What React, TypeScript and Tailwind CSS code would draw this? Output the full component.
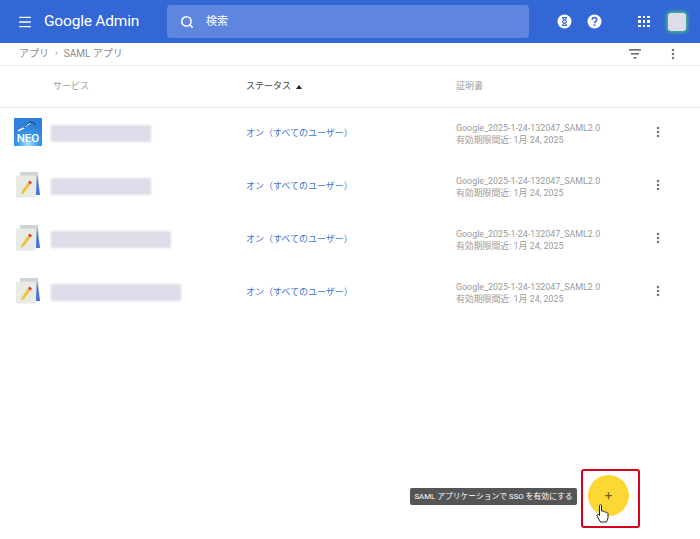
import { EllipsisVertical, Menu, Search } from "lucide-react";

const FONT = "font-['Roboto','Noto_Sans_CJK_JP',sans-serif]";

const rows = [
  { icon: "neo", blur: "w-[100px]" },
  { icon: "note", blur: "w-[100px]" },
  { icon: "note", blur: "w-[120px]" },
  { icon: "note", blur: "w-[130px]" },
];

function NeoIcon() {
  return (
    <svg width="28" height="28" viewBox="0 0 28 28" className="block">
      <defs>
        <radialGradient id="neo" cx="50%" cy="95%" r="70%">
          <stop offset="0%" stopColor="#a5e4ff" />
          <stop offset="55%" stopColor="#3a97ea" />
          <stop offset="100%" stopColor="#2f82dc" />
        </radialGradient>
      </defs>
      <rect width="28" height="28" fill="url(#neo)" />
      <path d="M4 13 C6 11 8 11 10 10 C11 8 13 7 16 5" fill="none" stroke="#fff" strokeWidth="1.3" />
      <path d="M10 10 C11 8 13 6 16 4 C18 4 20 5 22 7" fill="none" stroke="#1c2f5c" strokeWidth="1" />
      <text x="14" y="24" textAnchor="middle" fontSize="11.5" fontWeight="500" fill="#fff" fontFamily="Roboto, sans-serif">NEO</text>
    </svg>
  );
}

function NoteIcon() {
  return (
    <svg width="24" height="26" viewBox="0 0 24 26" className="block blur-[0.4px]">
      <path d="M4 0 H22 L24 23 H4 Z" fill="#ccd4d6" />
      <path d="M21 3 L24 23 H20 Z" fill="#3f74dc" />
      <rect x="0" y="3.5" width="20" height="22" rx="1" fill="#e8eae6" />
      <path d="M5.5 20 L12 10.5 L14.5 12.5 L7.5 21.5 L5 22.5 Z" fill="#f2c13a" />
      <path d="M12 10.5 L13.5 8.5 L16 10.5 L14.5 12.5 Z" fill="#d8413a" />
    </svg>
  );
}

function HourglassBadge() {
  return (
    <svg width="15" height="15" viewBox="0 0 15 15">
      <circle cx="7.5" cy="7.5" r="7" fill="#fff" />
      <path d="M5 3.5 H10 M5 11.5 H10 M5.5 3.5 C5.5 6 9.5 6 9.5 7.5 C9.5 9 5.5 9 5.5 11.5 M9.5 3.5 C9.5 6 5.5 6 5.5 7.5 C5.5 9 9.5 9 9.5 11.5" fill="none" stroke="#3367d6" strokeWidth="1.1" />
    </svg>
  );
}

function HelpBadge() {
  return (
    <svg width="15" height="15" viewBox="0 0 15 15">
      <circle cx="7.5" cy="7.5" r="7" fill="#fff" />
      <path d="M5.2 5.8 C5.2 2.8 9.8 2.8 9.8 5.6 C9.8 7.4 7.5 7.4 7.5 9.3" fill="none" stroke="#3367d6" strokeWidth="1.6" />
      <rect x="6.7" y="10.3" width="1.6" height="1.6" fill="#3367d6" />
    </svg>
  );
}

function FilterIcon() {
  return (
    <svg width="12" height="10" viewBox="0 0 12 10" className="block">
      <rect width="12" height="1.6" fill="#6f6f6f" />
      <rect x="2" y="4" width="8" height="1.6" fill="#6f6f6f" />
      <rect x="4.5" y="8" width="3" height="1.6" fill="#6f6f6f" />
    </svg>
  );
}

function HandCursor() {
  return (
    <svg width="13" height="19" viewBox="0 0 13 19" className="block">
      <path
        d="M3.5 1.5 C3.5 0.5 5.5 0.5 5.5 1.5 V7 L7 7 C8 7 8.5 8 8.5 8 C9.5 7.6 10 8.5 10 8.5 C11 8.2 12 9 12 10 V14 L10.5 18 H4.5 L1 12 C0.5 11 1.5 9.8 2.5 10.5 L3.5 11.5 Z"
        fill="#fff"
        stroke="#222"
        strokeWidth="1"
      />
    </svg>
  );
}

export default function App() {
  return (
    <div className={`relative h-[539px] w-[700px] overflow-hidden bg-white ${FONT}`}>
      <header className="flex h-[43px] items-center bg-[#3367d6]">
        <Menu size={16} strokeWidth={2} className="ml-[17px] text-white" />
        <span className="ml-[11px] w-[123px] text-[15.5px] tracking-[-0.2px] text-white">Google Admin</span>
        <div className="flex h-[33px] w-[362px] items-center rounded-[4px] bg-[#5e86de] pl-[13px]">
          <Search size={14} strokeWidth={2.6} className="text-white" />
          <span className="ml-[12px] pt-[1px] text-[11px] text-white">検索</span>
        </div>
        <div className="ml-[28px] flex items-center">
          <HourglassBadge />
          <span className="ml-[15px]">
            <HelpBadge />
          </span>
          <span className="ml-[36px] grid grid-cols-3 gap-[2px]">
            {Array.from({ length: 9 }).map((_, i) => (
              <span key={i} className="h-[2.5px] w-[2.5px] bg-white" />
            ))}
          </span>
          <span className="ml-[18px] h-[18px] w-[18px] rounded-[3px] bg-[#dcdde8] shadow-[0_0_3px_2px_#3fae8f] blur-[0.6px]" />
        </div>
      </header>

      <div className="flex h-[23px] items-center border-b border-[#eeeeee] pb-[1px] pl-[19px] pr-[20px] text-[10px] text-[#8a8a8a]">
        <span>アプリ</span>
        <span className="mx-[6px] text-[9px]">›</span>
        <span>SAML アプリ</span>
        <span className="ml-auto">
          <FilterIcon />
        </span>
        <EllipsisVertical size={14} strokeWidth={2.4} className="ml-[25px] text-[#757575]" />
      </div>

      <div className="flex h-[42px] items-center border-b border-[#e8e8e8] text-[9px]">
        <span className="ml-[53px] w-[193px] text-[#9e9e9e]">サービス</span>
        <span className="flex w-[210px] items-center text-[#424242]">
          ステータス
          <span className="ml-[5px] h-0 w-0 border-x-[3.5px] border-b-[4px] border-x-transparent border-b-[#212121]" />
        </span>
        <span className="text-[#9e9e9e]">証明書</span>
      </div>

      {rows.map((row, i) => (
        <div key={i} className="flex h-[53px] items-center">
          <div className="flex w-[51px] justify-center pb-[5px] pl-[5px]">
            {row.icon === "neo" ? <NeoIcon /> : <NoteIcon />}
          </div>
          <div className="w-[195px]">
            <div className={`mb-[2px] h-[17px] ${row.blur} bg-[#dddde9] blur-[1px]`} />
          </div>
          <span className="mb-[1px] w-[210px] text-[9px] text-[#3f74d8]">オン（すべてのユーザー）</span>
          <div className="mb-[1px] w-[195px] text-[8.9px] leading-[12px] text-[#9a9a9a]">
            <div>Google_2025-1-24-132047_SAML2.0</div>
            <div>有効期限間近: 1月 24, 2025</div>
          </div>
          <EllipsisVertical size={14} strokeWidth={2.4} className="mb-[6px] text-[#757575]" />
        </div>
      ))}

      <div className="absolute left-[410px] top-[488px] flex h-[17px] w-[167px] items-center justify-center whitespace-nowrap rounded-[2px] bg-[#555555] text-[7.8px] text-white">
        SAML アプリケーションで SSO を有効にする
      </div>
      <div className="absolute left-[581px] top-[469px] h-[59px] w-[59px] rounded-[3px] border-2 border-[#d9001b] pl-[5px] pt-[4px]">
        <div className="flex h-[41px] w-[41px] items-center justify-center rounded-full bg-[#fdd835] text-[13px] leading-none text-[#6b5a1e]">
          +
        </div>
      </div>
      <div className="absolute left-[596px] top-[504px]">
        <HandCursor />
      </div>
    </div>
  );
}
